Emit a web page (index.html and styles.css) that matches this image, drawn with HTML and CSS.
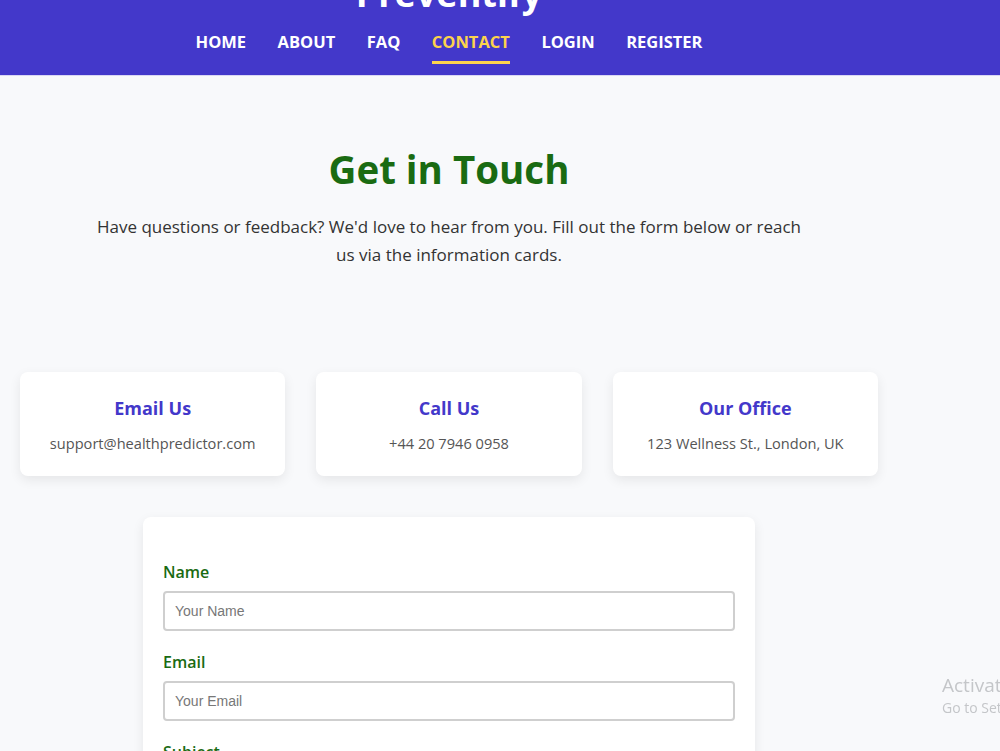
FILE: index.html
```html
<!DOCTYPE html>
<html lang="en">
<head>
  <meta charset="UTF-8">
  <meta name="viewport" content="width=device-width, initial-scale=1.0">
  <title>Contact - Preventify</title>
  <link rel="stylesheet" href="styles.css">
</head>
<body>

  <!-- Header -->
  <header class="site-header">
    <div class="header-inner">
      <div class="logo">Preventify</div>
      <nav class="navbar">
        <a href="/">Home</a>
        <a href="/about">About</a>
        <a href="/faq">FAQ</a>
        <a href="/contact" class="active">Contact</a>
        <a href="/login">Login</a>
        <a href="/register">Register</a>
      </nav>
    </div>
  </header>

  <!-- Contact Content -->
  <main class="contact-page">
    <section class="intro">
      <h1>Get in Touch</h1>
      <p>Have questions or feedback? We'd love to hear from you. Fill out the form below or reach us via the information cards.</p>
    </section>

    <section class="info-cards">
      <div class="card">
        <h3>Email Us</h3>
        <p>support@healthpredictor.com</p>
      </div>
      <div class="card">
        <h3>Call Us</h3>
        <p>+44 20 7946 0958</p>
      </div>
      <div class="card">
        <h3>Our Office</h3>
        <p>123 Wellness St., London, UK</p>
      </div>
    </section>

    <form class="contact-form">
      <label for="name">Name</label>
      <input type="text" id="name" placeholder="Your Name">
      <label for="email">Email</label>
      <input type="email" id="email" placeholder="Your Email">
      <label for="subject">Subject</label>
      <input type="text" id="subject" placeholder="Subject">
      <label for="message">Message</label>
      <textarea id="message" rows="5" placeholder="Your Message"></textarea>
      <button type="submit" class="btn">Send Message</button>
    </form>
  </main>

  <div class="activate">
    <div class="activate-title">Activate Windows</div>
    <div class="activate-sub">Go to Settings to activate Windows.</div>
  </div>

</body>
</html>
```

FILE: styles.css
```css
/* General Body Styling */
body {
  margin: 0;
  padding: 0;
  font-family: 'Open Sans', 'Noto Sans', sans-serif;
  background-color: #f8f9fb;
  color: #333;
  overflow: hidden;
}

/* Header */
.site-header {
  margin-top: -30px;
  background-color: #4338ca;
  padding-bottom: 11px;
  box-shadow: 0 1px 0 #d9d7f4;
}

.header-inner {
  width: 898px;
  text-align: center;
}

.site-header .logo {
  font-size: 36px;
  font-weight: 700;
  line-height: 48px;
  color: #ffffff;
}

.navbar {
  padding-top: 2px;
  display: flex;
  justify-content: center;
  gap: 31.5px;
}

.navbar a {
  color: #ffffff;
  text-decoration: none;
  text-transform: uppercase;
  font-size: 16.5px;
  font-weight: 700;
  line-height: 20px;
  padding: 12px 0 9px;
  border-bottom: 3px solid transparent;
}

.navbar a.active {
  color: #fcd34d;
  border-bottom-color: #fcd34d;
}

/* Page */
.contact-page {
  width: 898px;
}

.intro {
  text-align: center;
  padding-top: 66px;
}

.intro h1 {
  margin: 0;
  font-size: 38.5px;
  font-weight: 700;
  line-height: 56px;
  color: #1a6b12;
}

.intro p {
  max-width: 720px;
  margin: 16px auto 0;
  font-size: 17px;
  line-height: 28px;
  color: #333;
}

/* Info cards */
.info-cards {
  display: flex;
  gap: 31px;
  padding: 0 20px;
  margin-top: 103px;
}

.card {
  flex: 1;
  background-color: #ffffff;
  border-radius: 8px;
  box-shadow: 0 4px 12px rgba(0, 0, 0, 0.08);
  text-align: center;
  padding: 24px 10px 22px;
}

.card h3 {
  margin: 0;
  font-size: 18px;
  font-weight: 700;
  line-height: 24px;
  color: #4338ca;
}

.card p {
  margin: 12px 0 0;
  font-size: 14.6px;
  line-height: 22px;
  color: #555;
}

/* Form */
.contact-form {
  width: 572px;
  margin: 41px auto 0;
  padding: 45px 20px 20px;
  background-color: #ffffff;
  border-radius: 8px;
  box-shadow: 0 4px 12px rgba(0, 0, 0, 0.08);
}

.contact-form label {
  display: block;
  font-size: 16px;
  font-weight: 600;
  line-height: 20px;
  color: #1a6b12;
  margin-bottom: 9px;
}

.contact-form input,
.contact-form textarea {
  display: block;
  box-sizing: border-box;
  width: 100%;
  height: 40px;
  padding: 0 10px;
  margin-bottom: 21px;
  border: 2px solid #cfcfcf;
  border-radius: 4px;
  font-family: 'Liberation Sans', Arial, sans-serif;
  font-size: 14px;
  color: #333;
}

.contact-form input::placeholder,
.contact-form textarea::placeholder {
  color: #777;
}

.contact-form textarea {
  height: auto;
  padding: 10px;
}

.btn {
  width: 100%;
  padding: 12px;
  background-color: #4338ca;
  border: none;
  border-radius: 6px;
  color: #fff;
  font-size: 16px;
}

/* Windows watermark */
.activate {
  position: fixed;
  left: 942px;
  top: 672px;
  color: #c4c6c9;
  white-space: nowrap;
  font-family: 'Open Sans', sans-serif;
}

.activate-title {
  font-size: 19px;
  line-height: 26px;
}

.activate-sub {
  font-size: 14px;
  line-height: 20px;
}
```
